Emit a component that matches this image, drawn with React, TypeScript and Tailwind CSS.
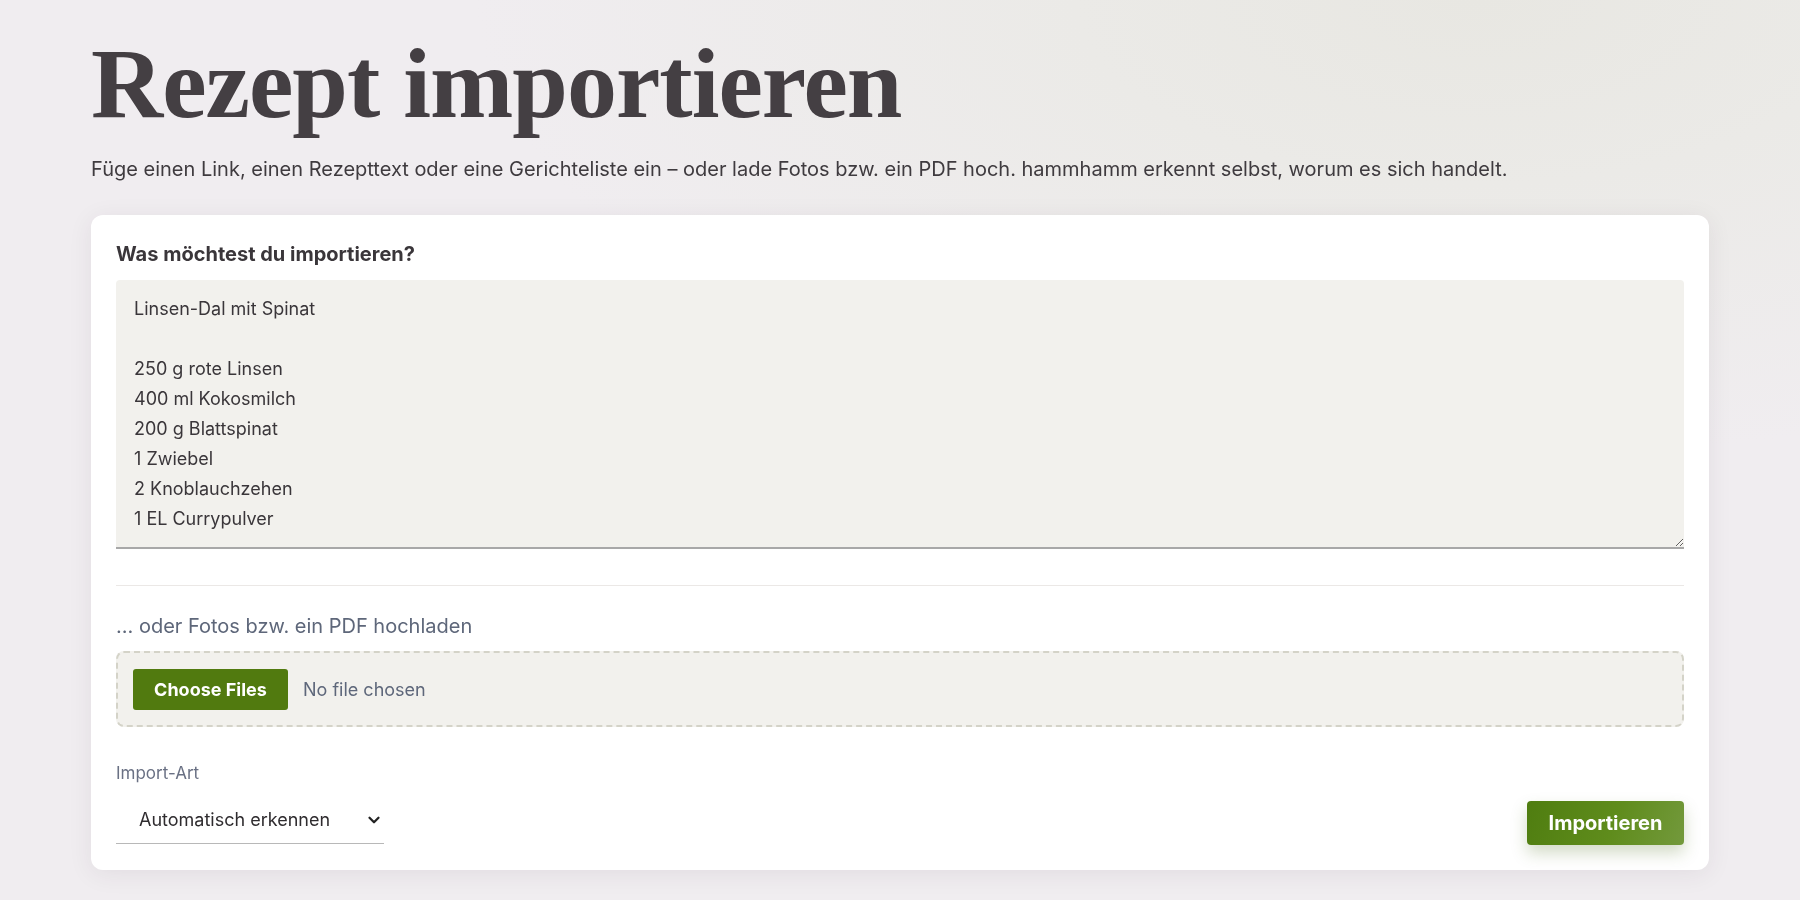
import { ChevronDown } from "lucide-react";

const RECIPE_TEXT = `Linsen-Dal mit Spinat

250 g rote Linsen
400 ml Kokosmilch
200 g Blattspinat
1 Zwiebel
2 Knoblauchzehen
1 EL Currypulver`;

export default function App() {
  return (
    <div
      className="min-h-[900px] w-full bg-[#f0edf0] bg-[radial-gradient(ellipse_1000px_460px_at_82%_0%,#e8e7e2_0%,#ebeae7_40%,rgba(240,237,240,0)_100%)] font-['Inter',sans-serif] text-[#3f3b3f]"
    >
      <div className="px-[91px] pt-[24px] pb-[30px]">
        <h1 className="font-['Liberation_Serif',serif] font-bold text-[100px] leading-[1.2] tracking-[-1px] text-[#443f43]">
          Rezept importieren
        </h1>
        <p className="mt-[11px] text-[20px] leading-[28px] text-[#3f3b3f]">
          Füge einen Link, einen Rezepttext oder eine Gerichteliste ein – oder lade Fotos bzw. ein PDF hoch. hammhamm
          erkennt selbst, worum es sich handelt.
        </p>

        <div className="mt-[32px] rounded-[12px] bg-white px-[25px] pt-[26px] pb-[26px] shadow-[0_4px_24px_rgba(60,40,60,0.08)]">
          <label className="block text-[20px] font-bold leading-[26px] text-[#3a363a]">
            Was möchtest du importieren?
          </label>
          <textarea
            defaultValue={RECIPE_TEXT}
            className="mt-[13px] block h-[269px] w-full resize-y rounded-t-[4px] border-0 border-b-[2px] border-[#a8a8a8] bg-[#f2f1ed] px-[18px] py-[14px] text-[18px] leading-[30px] text-[#3a363a] outline-none"
          />

          <div className="mt-[36px] h-px w-full bg-[#ebe8e6]" />

          <p className="mt-[27px] text-[20px] leading-[26px] text-[#5e677a]">… oder Fotos bzw. ein PDF hochladen</p>

          <div className="mt-[12px] flex h-[76px] items-center gap-[15px] rounded-[8px] border-[2px] border-dashed border-[#d4d3c8] bg-[#f2f1ed] px-[15px]">
            <span className="flex h-[41px] w-[155px] items-center justify-center rounded-[3px] bg-[#517a0f] text-[18px] font-bold text-white">
              Choose Files
            </span>
            <span className="text-[18px] text-[#5e677a]">No file chosen</span>
          </div>

          <div className="mt-[35px] flex items-end justify-between">
            <div>
              <p className="text-[17px] leading-[22px] text-[#6a7184]">Import-Art</p>
              <div className="mt-[12px] flex h-[48px] w-[268px] items-center justify-between border-b-[1.5px] border-[#b8b8b8] pl-[23px] pr-[1px] text-[18px] text-[#2f2c2f]">
                <span>Automatisch erkennen</span>
                <ChevronDown size={18} strokeWidth={3} className="text-[#222]" />
              </div>
            </div>
            <button className="mb-[-1px] flex h-[44px] w-[157px] items-center justify-center rounded-[4px] bg-[linear-gradient(110deg,#4f7d10_0%,#5f8c1c_55%,#73993c_100%)] text-[20px] font-bold text-white shadow-[0_8px_16px_rgba(80,110,30,0.25)]">
              Importieren
            </button>
          </div>
        </div>
      </div>
    </div>
  );
}
